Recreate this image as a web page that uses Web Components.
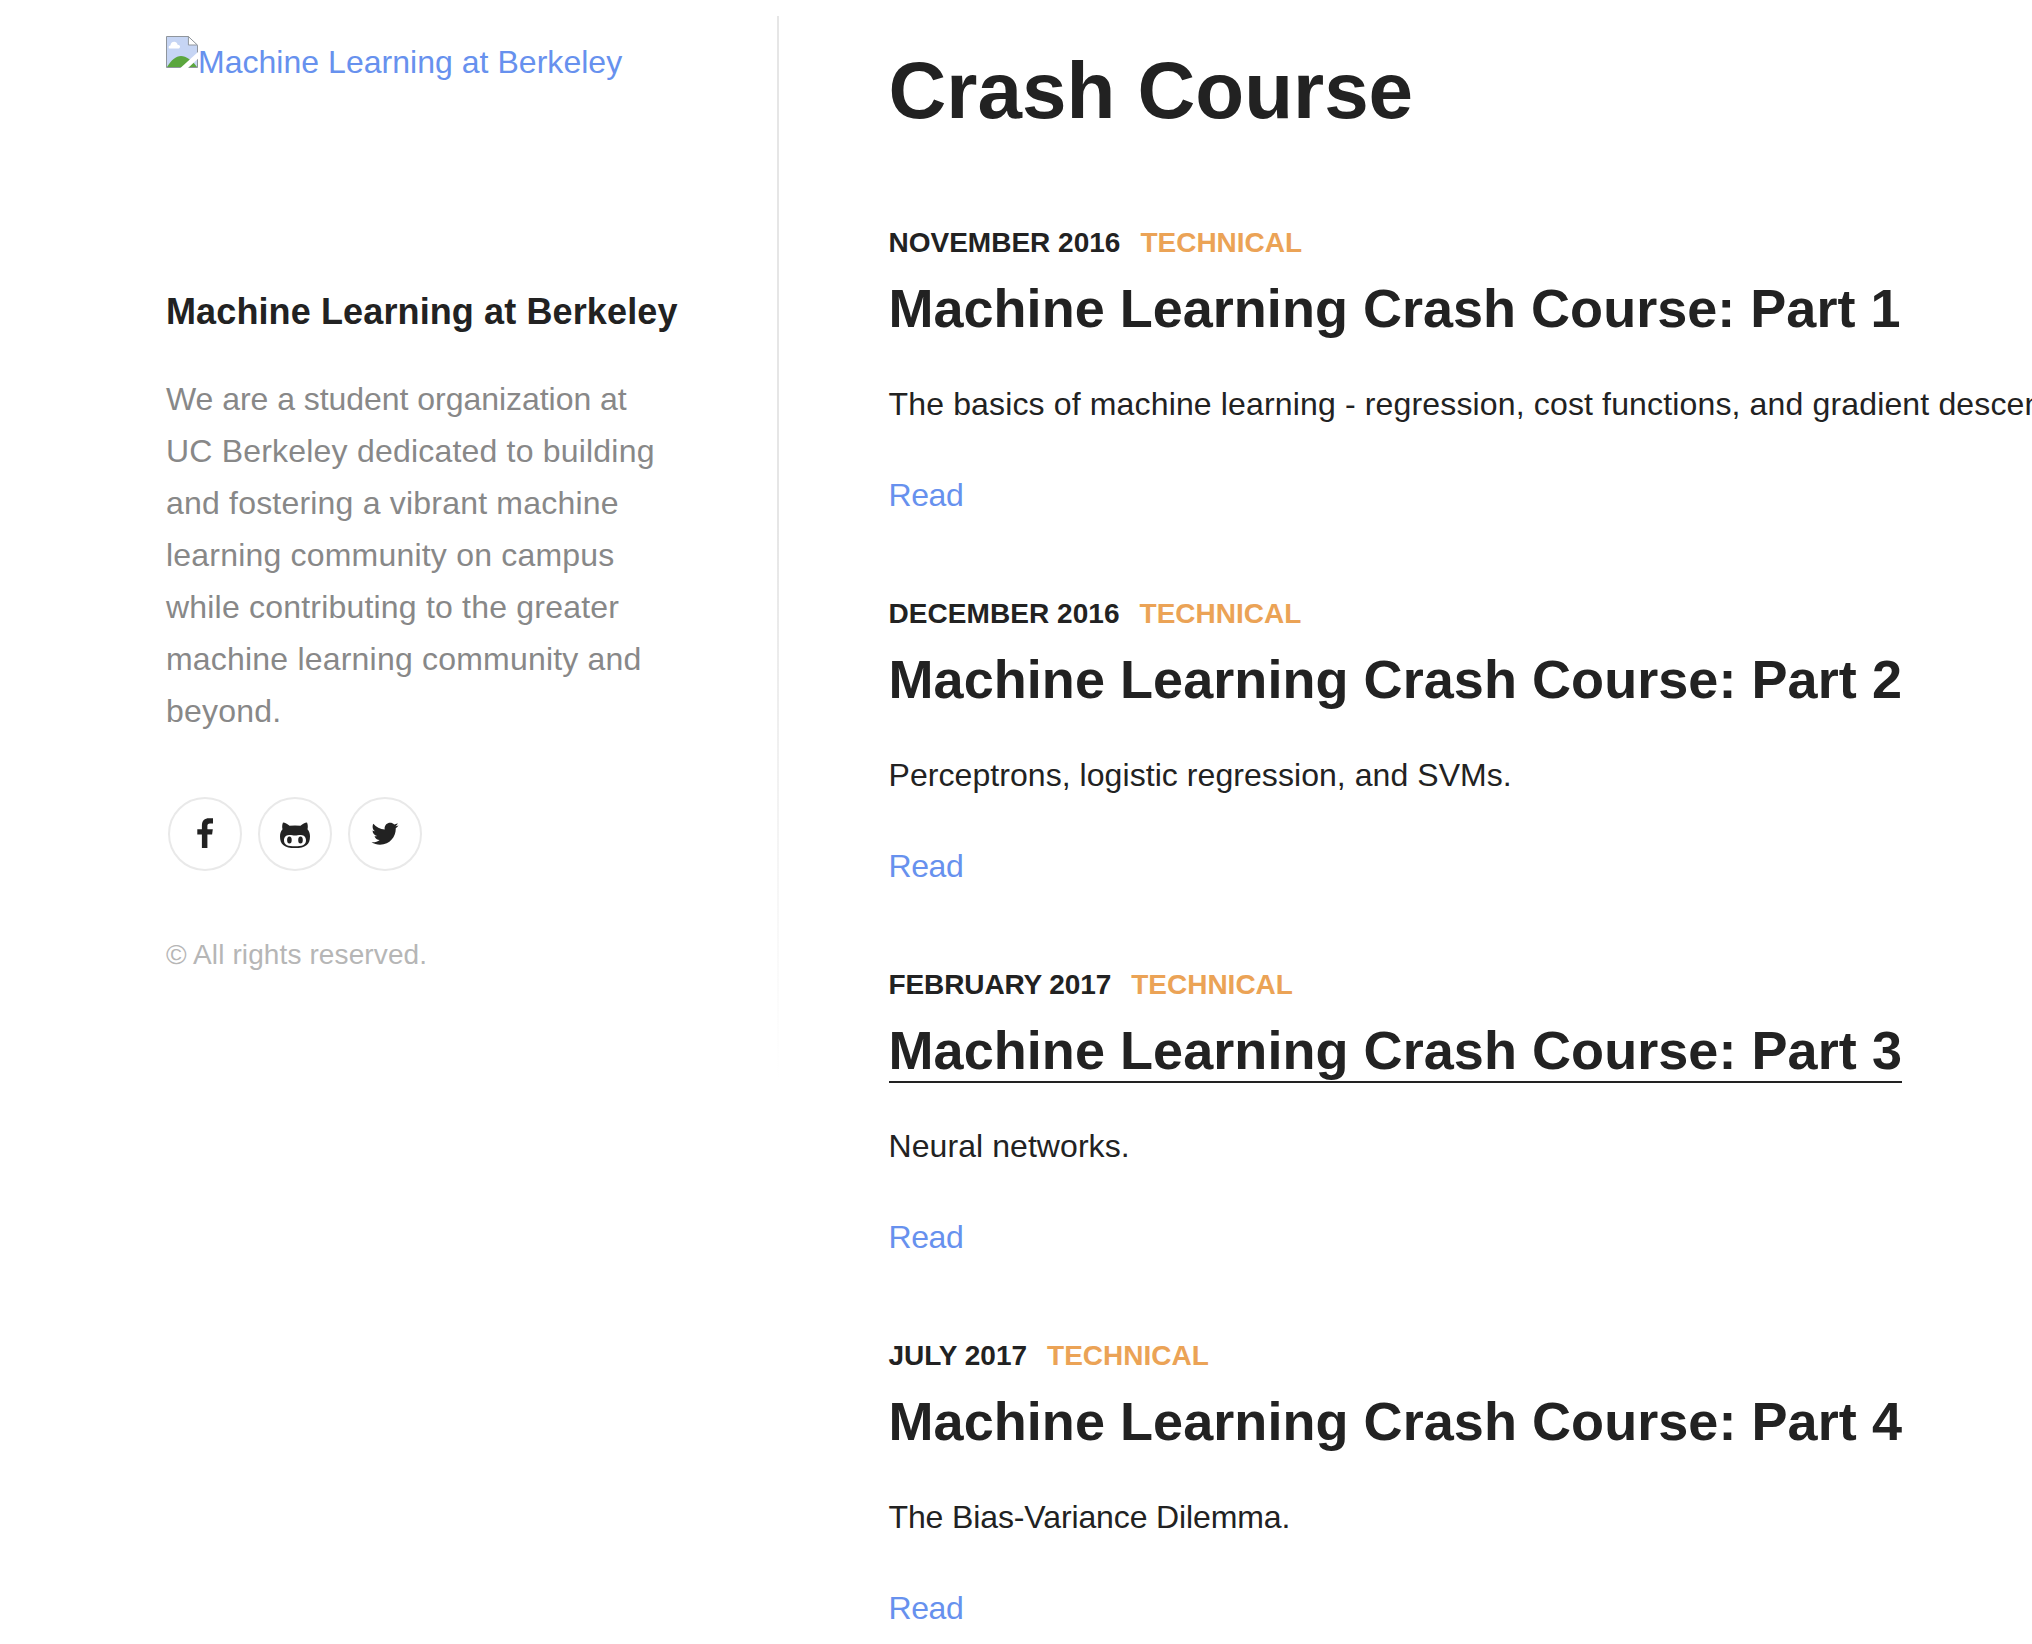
<!DOCTYPE html>
<html lang="en">
  <head>
    <meta charset="utf-8">
    <title>Crash Course - Machine Learning at Berkeley</title>
    <style>
      body {
        margin: 0;
        background: #fff;
        color: #222;
        font-family: "Liberation Sans", Arial, sans-serif;
        font-size: 32px;
        line-height: 52px;
        overflow: hidden;
      }
    </style>
  </head>

  <body>
    <blog-layout>
      <blog-sidebar slot="sidebar" name="Machine Learning at Berkeley">
        <span style="letter-spacing: -.04px">We are a student organization at</span><br>
        UC Berkeley dedicated to building<br>
        and fostering a vibrant machine<br>
        learning community on campus<br>
        while contributing to the greater<br>
        machine learning community and<br>
        beyond.
        <social-link slot="social" icon="facebook"></social-link>
        <social-link slot="social" icon="github"></social-link>
        <social-link slot="social" icon="twitter"></social-link>
        <span slot="copyright">© All rights reserved.</span>
      </blog-sidebar>

      <span slot="title">Crash Course</span>
      <blog-post style="--track: .15px; --heading-track: .02px" date="November 2016" category="Technical" heading="Machine Learning Crash Course: Part 1">The basics of machine learning - regression, cost functions, and gradient descent.</blog-post>
      <blog-post style="--track: .06px; --date-track: .06px" date="December 2016" category="Technical" heading="Machine Learning Crash Course: Part 2">Perceptrons, logistic regression, and SVMs.</blog-post>
      <blog-post style="--track: .07px; --date-track: -.11px" date="February 2017" category="Technical" heading="Machine Learning Crash Course: Part 3" active>Neural networks.</blog-post>
      <blog-post style="--track: -.12px" date="July 2017" category="Technical" heading="Machine Learning Crash Course: Part 4">The Bias-Variance Dilemma.</blog-post>
    </blog-layout>

    <template id="layout">
      <style>
        :host { display: flex; width: 2032px; height: 1644px; overflow: hidden; }
        .side { flex: none; width: 611px; padding: 36px 0 0 166px; }
        /* divider fades out towards the bottom */
        .line {
          flex: none;
          width: 2px;
          height: 1064px;
          margin-top: 16px;
          background: linear-gradient(to bottom, #e6e6e6 0%, #e6e6e6 48%, #fff 100%);
        }
        main { flex: 1; min-width: 0; padding: 43px 0 0 109.5px; }
        h1 { margin: 0 0 88px; font-size: 80px; line-height: 96px; }
        .posts { display: flex; flex-direction: column; gap: 77px; }
      </style>
      <div class="side"><slot name="sidebar"></slot></div>
      <div class="line"></div>
      <main>
        <h1><slot name="title"></slot></h1>
        <div class="posts"><slot></slot></div>
      </main>
    </template>

    <template id="sidebar">
      <style>
        :host { display: block; }
        a { color: #6791ee; text-decoration: none; }
        .logo { display: flex; height: 246px; white-space: nowrap; letter-spacing: .03px; }
        .logo svg { flex: none; width: 32px; height: 32px; }
        h2 { margin: 0 0 31px; font-size: 36px; line-height: 60px; letter-spacing: .12px; white-space: nowrap; }
        p { margin: 0; color: #888; letter-spacing: .2px; white-space: nowrap; }
        .social { display: flex; gap: 16px; margin: 60px 0 58px 2px; }
        .copyright { color: #b6b6b6; font-size: 28px; letter-spacing: .11px; }
      </style>
      <a class="logo" href="#">
        <svg viewBox="0 0 16 16">
          <path d="M.25.25h11l4.5 4.5v11H.25z" fill="#c6d5f4" stroke="#8f959c" stroke-width=".5"/>
          <path d="M11.2.3v4.2h4.5z" fill="#fff" stroke="#8f959c" stroke-width=".5"/>
          <path d="M2 6.3c-.9 0-.9-1.5.2-1.6.3-2.3 3.3-2.3 3.6-.3 1.6 0 1.6 1.9.2 1.9z" fill="#fff"/>
          <path d="M.5 15.500c2-3.300 4.500-5.500 7-5.500s5.500 2 8 5.500z" fill="#5ba63e"/>
          <path d="M7.200 16L16 8v3.400L11 16z" fill="#fff"/>
        </svg>
        <span class="alt"></span>
      </a>
      <h2></h2>
      <p><slot></slot></p>
      <div class="social"><slot name="social"></slot></div>
      <div class="copyright"><slot name="copyright"></slot></div>
    </template>

    <template id="post">
      <style>
        :host { display: block; white-space: nowrap; }
        a { text-decoration: none; }
        .meta { display: flex; gap: 20px; font-size: 28px; line-height: 32px; font-weight: bold; text-transform: uppercase; }
        .date { letter-spacing: var(--date-track, 0); }
        .category { color: #eba356; }
        h2 { margin: 19px 0 40px; font-size: 54px; line-height: 60px; letter-spacing: var(--heading-track, .06px); }
        h2 a { display: inline-block; height: 60px; color: #222; }
        :host([active]) h2 a { box-shadow: 0 1px #fff, 0 3px #222; }
        p { margin: 0 0 39px; letter-spacing: var(--track, 0); }
        .read { display: block; color: #6791ee; letter-spacing: -.4px; }
      </style>
      <div class="meta"><span class="date"></span><span class="category"></span></div>
      <h2><a href="#"></a></h2>
      <p><slot></slot></p>
      <a class="read" href="#"><span>Read</span></a>
    </template>

    <script>
      const icons = {
        facebook: '<path transform="translate(29.3 21.3)" d="M15.700 0v5.200h-3c-2 0-2.600 1-2.600 2.800v3h5.400l-.7 5.200h-4.700V29.700H4.600V16.200H0V11h4.600V7.200C4.600 2.500 7.400 0 11.600 0z"/>',
        github: '<path fill-rule="evenodd" transform="translate(22 25.2)" d="M3 0.200C5 .2 7.400 1.800 9.500 3.600Q15 2.900 20.500 3.600C22.600 1.800 25 .2 27 .2C28 2.700 28 5 27.500 7C29.200 9 30 11 30 14C30 22.500 25.500 25.800 15 25.800S0 22.500 0 14C0 11 .8 9 2.500 7C2 5 2 2.700 3 .2zM9 12.700C5.500 12.700 4 15.500 4 18C4 23 8 24 15 24S26 23 26 18C26 15.500 24.500 12.700 21 12.700C18 12.700 17 13.200 15 13.200S12 12.700 9 12.700z"/><ellipse cx="31.400" cy="42.900" rx="2.300" ry="3.500"/><ellipse cx="42.500" cy="42.900" rx="2.300" ry="3.500"/>',
        twitter: '<path transform="translate(23.500 23.300) scale(1.125)" d="M23.954 4.569c-.885.389-1.830.654-2.825.775 1.014-.611 1.794-1.574 2.163-2.723-.951.555-2.005.959-3.127 1.184-.896-.959-2.173-1.559-3.591-1.559-2.717 0-4.920 2.203-4.920 4.917 0 .390.045.765.127 1.124C7.691 8.094 4.066 6.130 1.640 3.161c-.427.722-.666 1.561-.666 2.475 0 1.710.870 3.213 2.188 4.096-.807-.026-1.566-.248-2.228-.616v.061c0 2.385 1.693 4.374 3.946 4.827-.413.111-.849.171-1.296.171-.314 0-.615-.030-.916-.086.631 1.953 2.445 3.377 4.604 3.417-1.680 1.319-3.809 2.105-6.102 2.105-.390 0-.779-.023-1.170-.067 2.189 1.394 4.768 2.209 7.557 2.209 9.054 0 13.999-7.496 13.999-13.986 0-.209 0-.420-.015-.630.961-.689 1.800-1.560 2.460-2.548z"/>'
      };

      const tpl = id => document.getElementById(id).content.cloneNode(true);

      class BlogLayout extends HTMLElement {
        connectedCallback() {
          this.attachShadow({ mode: 'open' }).append(tpl('layout'));
        }
      }

      class BlogSidebar extends HTMLElement {
        connectedCallback() {
          const root = this.attachShadow({ mode: 'open' });
          root.append(tpl('sidebar'));
          root.querySelector('.alt').textContent = this.getAttribute('name');
          root.querySelector('h2').textContent = this.getAttribute('name');
        }
      }

      class SocialLink extends HTMLElement {
        connectedCallback() {
          this.attachShadow({ mode: 'open' }).innerHTML = `
            <style>
              :host { display: block; box-sizing: border-box; width: 74px; height: 74px; border: 2px solid #e9e9e9; border-radius: 50%; }
              svg { display: block; width: 74px; height: 74px; margin: -2px; fill: #222; }
            </style>
            <svg viewBox="0 0 74 74">${icons[this.getAttribute('icon')]}</svg>
          `;
        }
      }

      class BlogPost extends HTMLElement {
        connectedCallback() {
          const root = this.attachShadow({ mode: 'open' });
          root.append(tpl('post'));
          root.querySelector('.date').textContent = this.getAttribute('date');
          root.querySelector('.category').textContent = this.getAttribute('category');
          root.querySelector('h2 a').textContent = this.getAttribute('heading');
        }
      }

      customElements.define('blog-layout', BlogLayout);
      customElements.define('blog-sidebar', BlogSidebar);
      customElements.define('social-link', SocialLink);
      customElements.define('blog-post', BlogPost);
    </script>
  </body>
</html>
